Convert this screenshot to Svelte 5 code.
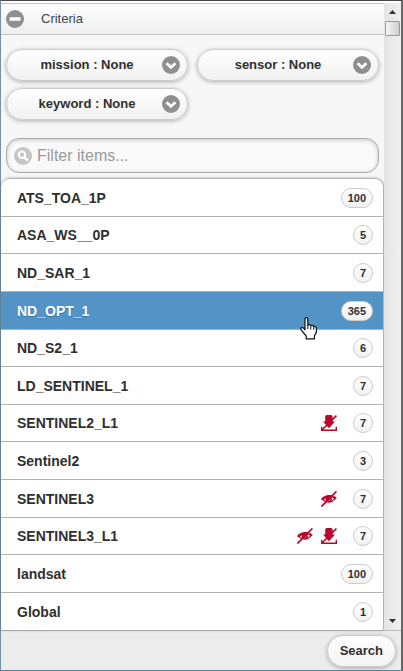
<script>
  const filters = [
    { id: 'mission', label: 'mission : None' },
    { id: 'sensor', label: 'sensor : None' },
    { id: 'keyword', label: 'keyword : None' }
  ];
  const items = [
    { name: 'ATS_TOA_1P', count: 100 },
    { name: 'ASA_WS__0P', count: 5 },
    { name: 'ND_SAR_1', count: 7 },
    { name: 'ND_OPT_1', count: 365, active: true },
    { name: 'ND_S2_1', count: 6 },
    { name: 'LD_SENTINEL_1', count: 7 },
    { name: 'SENTINEL2_L1', count: 7, noDownload: true },
    { name: 'Sentinel2', count: 3 },
    { name: 'SENTINEL3', count: 7, noView: true },
    { name: 'SENTINEL3_L1', count: 7, noView: true, noDownload: true },
    { name: 'landsat', count: 100 },
    { name: 'Global', count: 1 }
  ];
</script>

<div class="panel">
  <div class="body">
    <main>
      <button class="criteria" aria-expanded="true">
        <svg width="18" height="18" viewBox="0 0 18 18" aria-hidden="true">
          <circle cx="9" cy="9" r="9" fill="#8f8f8f" />
          <rect x="3.5" y="7.3" width="11" height="3.4" rx="0.5" fill="#fff" />
        </svg>
        <span>Criteria</span>
      </button>

      <div class="filters">
        {#each filters as f (f.id)}
          <div class="pill">
            <select aria-label={f.id}><option>{f.label}</option></select>
            <svg width="18" height="18" viewBox="0 0 18 18" aria-hidden="true">
              <circle cx="9" cy="9" r="9" fill="#8f8f8f" />
              <path d="M4.6 7.2 9 11.4l4.4-4.2" fill="none" stroke="#fff" stroke-width="2.8" />
            </svg>
          </div>
        {/each}
      </div>

      <label class="search">
        <svg width="18" height="18" viewBox="0 0 18 18" aria-hidden="true">
          <circle cx="9" cy="9" r="9" fill="#c6c6c6" />
          <circle cx="8" cy="7.8" r="3.2" fill="none" stroke="#fff" stroke-width="2" />
          <path d="m10.3 10.2 3.5 3.5" stroke="#fff" stroke-width="2.4" />
        </svg>
        <input type="text" placeholder="Filter items..." aria-label="Filter items" />
      </label>

      <ul>
        {#each items as item (item.name)}
          <li class:active={item.active}>
            <a href="#{item.name}">
              <span class="name">{item.name}</span>
              {#if item.noView}
                <svg class="flag" width="16" height="16" viewBox="0 0 16 16" aria-hidden="true">
                  <path d="M1 9C3.4 5 11 3.6 15 7.6" fill="none" stroke="#b9052b" stroke-width="2.4" />
                  <path d="M2.4 8.8c3 3.4 8.2 3 11.4-1" fill="none" stroke="#b9052b" stroke-width="1.2" />
                  <circle cx="7.8" cy="8" r="3.2" fill="#b9052b" />
                  <path d="m1.8 16 14-14.4" stroke="#fff" stroke-width="0.8" opacity=".5" />
                  <path d="M.4 15.6 15.4.4" stroke="#b9052b" stroke-width="1.6" />
                </svg>
              {/if}
              {#if item.noDownload}
                <svg class="flag" width="16" height="16" viewBox="0 0 16 16" aria-hidden="true">
                  <path d="M4.2 1.6Q4.2 0 5.8 0h4.2q1.6 0 1.6 1.6v4.8h2.4L8 13.2 2 6.4h2.2z" fill="#b9052b" />
                  <path d="M.7 11.8v3.4h14.6v-3.4" fill="none" stroke="#b9052b" stroke-width="1.4" />
                  <path d="M1 15 15.4.6" stroke="#b9052b" stroke-width="1.6" />
                </svg>
              {/if}
              <span class="count">{item.count}</span>
            </a>
            {#if item.active}
              <svg class="cursor" width="18" height="23" viewBox="0 0 18 23" aria-hidden="true">
                <path
                  d="M5 2q0-1.4 1.4-1.4T7.8 2v6q2-.8 3 .5 2-.5 2.8.8 2.6-.2 2.8 2V15l-2 4v2.8H6.2V19L1 12.6Q.4 10.6 2.2 10.5q1.6.2 2.8 2.6z"
                  fill="#fff" stroke="#111" stroke-width="1.2" />
                <path d="M7.9 8v4M10.8 9v3.5M13.7 9.8v3" stroke="#111" stroke-width="1" />
              </svg>
            {/if}
          </li>
        {/each}
      </ul>
    </main>

    <div class="scrollbar">
      <button aria-label="Scroll up">
        <svg width="7" height="4" viewBox="0 0 7 4"><path d="M0 4 3.5 0 7 4z" fill="#333" /></svg>
      </button>
      <div class="thumb"></div>
      <button class="down" aria-label="Scroll down">
        <svg width="7" height="4" viewBox="0 0 7 4"><path d="M0 0 3.5 4 7 0z" fill="#333" /></svg>
      </button>
    </div>
  </div>

  <footer><button>Search</button></footer>
</div>

<style>
  .panel {
    box-sizing: border-box;
    min-height: 100vh;
    display: flex;
    flex-direction: column;
    border: 1px solid #4c8a99;
    border-left-color: #6f93a5;
    border-top-color: #4b464c;
    border-right: 2px solid #666;
    background: #ececec;
    color: #2f2f2f;
    font: bold 13px/16px "Liberation Sans", Arial, sans-serif;
  }
  button, select, input {
    font: inherit;
    color: inherit;
    margin: 0;
  }
  .body {
    display: flex;
    border-top: 2px solid #fff;
    border-bottom: 1px solid #bbb;
  }
  main {
    flex: 1;
    min-width: 0;
    background: #f7f7f7;
  }
  .criteria {
    box-sizing: border-box;
    display: flex;
    align-items: center;
    gap: 17px;
    width: 100%;
    height: 32px;
    padding: 0 5px;
    border: 0;
    border-top: 1px solid #c4c4c4;
    border-bottom: 1px solid #c4c4c4;
    background: linear-gradient(#fff, #eee);
    color: #3d454c;
    font-weight: normal;
  }
  .filters {
    display: grid;
    grid-template-columns: 1fr 1fr;
    gap: 7px 9px;
    padding: 14px 5px 18px;
  }
  .pill {
    display: grid;
    align-items: center;
  }
  .pill > * {
    grid-area: 1 / 1;
  }
  .pill svg {
    justify-self: end;
    margin-right: 8px;
    pointer-events: none;
  }
  select {
    appearance: none;
    box-sizing: border-box;
    width: 100%;
    height: 32px;
    padding: 0 30px 0 10px;
    border: 1px solid #ccc;
    border-radius: 16px;
    background: linear-gradient(#fff, #f1f1f1);
    box-shadow: 0 1px 4px rgba(0, 0, 0, 0.3);
    text-align: center;
    text-align-last: center;
  }
  .search {
    box-sizing: border-box;
    display: flex;
    align-items: center;
    gap: 5px;
    height: 35px;
    margin: 0 5px 5px;
    padding: 0 7px;
    border: 1px solid #aaa;
    border-radius: 13px;
    background: #f9f9f9;
    box-shadow: inset 0 1px 4px rgba(0, 0, 0, 0.2);
  }
  input {
    flex: 1;
    min-width: 0;
    padding: 0;
    border: 0;
    outline: 0;
    background: none;
    font-size: 16px;
    font-weight: normal;
  }
  input::placeholder {
    color: #999;
    opacity: 1;
  }
  ul {
    margin: 0;
    padding: 0;
    list-style: none;
    border: 1px solid #b3b3b3;
    border-width: 1px 1px 0 0;
    border-radius: 9px 9px 0 0;
    background: #fff;
    box-shadow: 0 0 3px rgba(0, 0, 0, 0.3);
  }
  li {
    position: relative;
    box-sizing: border-box;
    height: 38px;
    border-bottom: 1px solid #b3b3b3;
  }
  li:nth-child(5n + 2), li:nth-child(5n) {
    height: 37px;
  }
  li:last-child {
    border-bottom: 0;
  }
  a {
    display: flex;
    align-items: center;
    gap: 8px;
    height: 100%;
    padding: 0 10px 0 16px;
    color: inherit;
    font-size: 14px;
    text-decoration: none;
  }
  .active {
    background: #5393c5;
    color: #fff;
    text-shadow: 0 1px 1px #3373a5;
  }
  .name {
    flex: 1;
  }
  .count {
    box-sizing: border-box;
    min-width: 19px;
    height: 20px;
    margin-left: 8px;
    padding: 0 6px;
    border: 1px solid #ccc;
    border-radius: 10px;
    background: linear-gradient(#fff, #f1f1f1);
    color: #2f2f2f;
    font-size: 11px;
    line-height: 18px;
    text-align: center;
    text-shadow: none;
  }
  .cursor {
    position: absolute;
    right: 65px;
    top: 25px;
    z-index: 1;
  }
  .scrollbar {
    display: flex;
    flex-direction: column;
    align-items: center;
    width: 17px;
    background: linear-gradient(90deg, #e4e4e4, #f0f0f0);
  }
  .scrollbar button {
    display: grid;
    place-items: center;
    width: 100%;
    height: 18px;
    padding: 0;
    border: 0;
    background: none;
  }
  .scrollbar .down {
    margin-top: auto;
  }
  .thumb {
    box-sizing: border-box;
    width: 15px;
    height: 15px;
    border: 1px solid #999;
    border-radius: 1px;
    background: linear-gradient(90deg, #f6f6f6, #cfcfcf);
  }
  footer {
    display: flex;
    justify-content: flex-end;
    padding: 4px 5px 3px;
  }
  footer button {
    height: 32px;
    padding: 0 12px;
    border: 1px solid #ccc;
    border-radius: 16px;
    background: linear-gradient(#fff, #f3f3f3);
    box-shadow: 0 1px 4px rgba(0, 0, 0, 0.3);
  }
</style>
